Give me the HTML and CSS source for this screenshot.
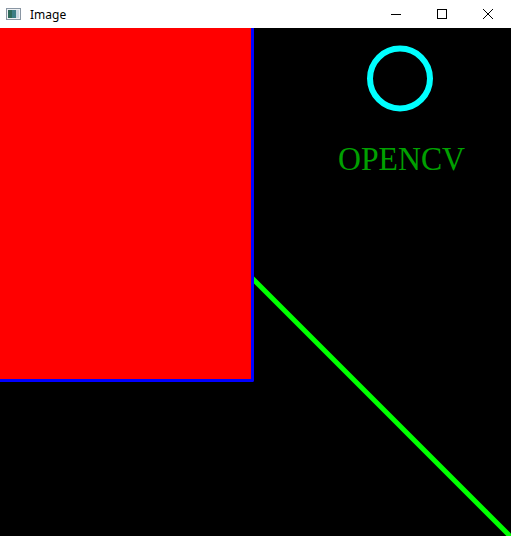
FILE: index.html
```html
<!DOCTYPE html>
<html>
<head>
<meta charset="utf-8">
<title>Image</title>
<link rel="stylesheet" href="styles.css">
</head>
<body>
<div class="window">
  <div class="titlebar">
    <svg class="app-icon" width="16" height="16" viewBox="0 0 16 16">
      <rect x="0.5" y="2.5" width="14" height="11" fill="#eef1f4" stroke="#8a96a3"/>
      <rect x="2" y="4" width="8" height="8" fill="#3d7e86"/>
      <rect x="2" y="4" width="4" height="8" fill="#2f6a5a"/>
      <rect x="10" y="4" width="3" height="8" fill="#c9d6e0"/>
    </svg>
    <span class="title">Image</span>
    <div class="controls">
      <div class="ctl">
        <svg width="10" height="10" viewBox="0 0 10 10"><line x1="0" y1="5.5" x2="10" y2="5.5" stroke="#000" stroke-width="1"/></svg>
      </div>
      <div class="ctl">
        <svg width="10" height="10" viewBox="0 0 10 10"><rect x="0.5" y="0.5" width="9" height="9" fill="none" stroke="#000" stroke-width="1"/></svg>
      </div>
      <div class="ctl">
        <svg width="10" height="10" viewBox="0 0 10 10"><path d="M0 0 L10 10 M10 0 L0 10" stroke="#000" stroke-width="1"/></svg>
      </div>
    </div>
  </div>
  <svg class="canvas" width="511" height="508" viewBox="0 0 511 508">
    <rect x="0" y="0" width="511" height="508" fill="#000"/>
    <line x1="-10" y1="-12" x2="530" y2="528" stroke="#00ff00" stroke-width="5"/>
    <rect x="0" y="0" width="251" height="351" fill="#ff0000"/>
    <rect x="-10" y="-10" width="262.5" height="362.5" fill="none" stroke="#0000ff" stroke-width="3" stroke-linejoin="round"/>
    <circle cx="400" cy="50.5" r="30" fill="none" stroke="#00ffff" stroke-width="6"/>
    <text x="338" y="141.5" class="cvtext" textLength="127" lengthAdjust="spacingAndGlyphs">OPENCV</text>
  </svg>
</div>
</body>
</html>
```

FILE: styles.css
```css
html, body {
  margin: 0;
  padding: 0;
  background: #000;
  overflow: hidden;
}
.window {
  width: 511px;
  height: 536px;
  display: flex;
  flex-direction: column;
}
.titlebar {
  height: 28px;
  background: #fff;
  display: flex;
  align-items: center;
  flex-shrink: 0;
}
.app-icon {
  margin-left: 6px;
  margin-right: 8px;
  flex-shrink: 0;
}
.title {
  font-family: "Noto Sans", "Open Sans", sans-serif;
  font-size: 12px;
  color: #000;
  margin-top: 1px;
}
.controls {
  margin-left: auto;
  display: flex;
  height: 28px;
}
.ctl {
  width: 46px;
  height: 28px;
  display: flex;
  align-items: center;
  justify-content: center;
}
.canvas {
  display: block;
}
.cvtext {
  font-family: "Liberation Serif", serif;
  font-size: 34px;
  fill: #00a000;
}
```
